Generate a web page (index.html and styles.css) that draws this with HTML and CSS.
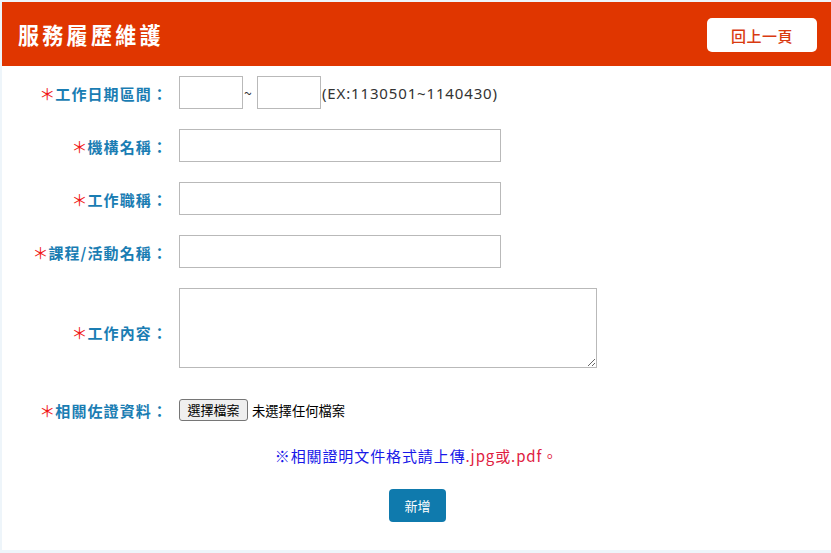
FILE: index.html
```html
<!DOCTYPE html>
<html lang="zh-Hant">
<head>
<meta charset="utf-8">
<title>服務履歷維護</title>
<link rel="stylesheet" href="styles.css">
</head>
<body>
<div class="panel">
  <header class="head">
    <h1 class="title">服務履歷維護</h1>
    <button class="back" type="button">回上一頁</button>
  </header>
  <form class="form">
    <div class="row">
      <label class="lbl"><span class="req">＊</span>工作日期區間：</label>
      <div class="field">
        <input class="inp inp-s" type="text">
        <span class="tilde">~</span>
        <input class="inp inp-s" type="text">
        <span class="hint">(EX:1130501~1140430)</span>
      </div>
    </div>
    <div class="row">
      <label class="lbl"><span class="req">＊</span>機構名稱：</label>
      <div class="field"><input class="inp inp-m" type="text"></div>
    </div>
    <div class="row">
      <label class="lbl"><span class="req">＊</span>工作職稱：</label>
      <div class="field"><input class="inp inp-m" type="text"></div>
    </div>
    <div class="row">
      <label class="lbl"><span class="req">＊</span>課程/活動名稱：</label>
      <div class="field"><input class="inp inp-m" type="text"></div>
    </div>
    <div class="row row-ta">
      <label class="lbl"><span class="req">＊</span>工作內容：</label>
      <div class="field"><textarea class="ta"></textarea></div>
    </div>
    <div class="row row-file">
      <label class="lbl"><span class="req">＊</span>相關佐證資料：</label>
      <div class="field">
        <button class="filebtn" type="button">選擇檔案</button>
        <span class="filetxt">未選擇任何檔案</span>
      </div>
    </div>
    <p class="note">※相關證明文件格式請上傳<span class="ext">.jpg或.pdf。</span></p>
    <div class="actions">
      <button class="submit" type="button">新增</button>
    </div>
  </form>
</div>
</body>
</html>
```

FILE: styles.css
```css
* { box-sizing: border-box; }
html, body { margin: 0; padding: 0; }
body {
  background: #eef5fa;
  font-family: "Noto Sans CJK TC", "Noto Sans", sans-serif;
  width: 831px;
  height: 553px;
  overflow: hidden;
}
.panel {
  margin: 2px 0 0 2px;
  background: #ffffff;
  height: 548px;
}
.head {
  height: 64px;
  background: #e03600;
  display: flex;
  align-items: center;
  justify-content: space-between;
  padding: 0 14px 0 16px;
}
.title {
  margin: 0;
  color: #ffffff;
  font-size: 21px;
  font-weight: 700;
  letter-spacing: 3.3px;
  line-height: 1;
  transform: scaleY(1.08);
}
.back {
  width: 110px;
  height: 34px;
  background: #ffffff;
  border: none;
  border-radius: 5px;
  color: #d93a10;
  font-family: inherit;
  font-size: 15px;
  font-weight: 500;
  letter-spacing: 0.5px;
  padding: 0;
  margin-top: 2px;
}
.form {
  padding-top: 10px;
  display: flex;
  flex-direction: column;
}
.row {
  display: flex;
  align-items: center;
  margin-bottom: 20px;
}
.lbl {
  width: 166px;
  text-align: right;
  color: #1a7db3;
  font-size: 15px;
  font-weight: 700;
  letter-spacing: 1.1px;
  margin-right: 11px;
  flex: none;
}
.req {
  color: #f01818;
  font-weight: 400;
  font-size: 16px;
  letter-spacing: 0;
}
.field {
  display: flex;
  align-items: center;
}
.inp {
  height: 33px;
  border: 1px solid #b9b9b9;
  border-radius: 0;
  padding: 0 4px;
  font-size: 14px;
  background: #fff;
  margin: 0;
}
.inp-s { width: 64px; }
.inp-m { width: 322px; }
.tilde {
  color: #333;
  font-size: 14px;
  width: 14px;
  text-align: left;
  padding-left: 1px;
}
.hint {
  color: #333;
  font-family: "Noto Sans", "Noto Sans CJK TC", sans-serif;
  font-size: 15px;
  letter-spacing: 0.85px;
  margin-left: 1px;
}
.ta {
  width: 418px;
  height: 80px;
  border: 1px solid #b9b9b9;
  margin: 0;
  resize: vertical;
}
.row-ta .lbl { margin-top: 8px; }
.row-file {
  height: 44px;
  margin-bottom: 0;
}
.filebtn {
  height: 22px;
  width: 69px;
  padding: 0;
  border: 1px solid #767676;
  border-radius: 3px;
  background: #efefef;
  color: #000;
  font-family: "Noto Sans CJK TC", sans-serif;
  font-size: 13px;
  line-height: 20px;
  margin: 0 4px 0 0;
}
.filetxt {
  color: #000;
  font-size: 13.3px;
}
.note {
  margin: 13px 0 0;
  text-align: center;
  line-height: 22px;
  font-size: 15px;
  color: #1818e8;
  letter-spacing: 0.9px;
}
.ext { color: #e02040; }
.actions {
  display: flex;
  justify-content: center;
  margin-top: 22px;
  padding-left: 2px;
}
.submit {
  width: 57px;
  height: 33px;
  border: none;
  border-radius: 4px;
  background: #0f7aad;
  color: #fff;
  font-family: inherit;
  font-size: 13px;
  padding: 0;
}
```
